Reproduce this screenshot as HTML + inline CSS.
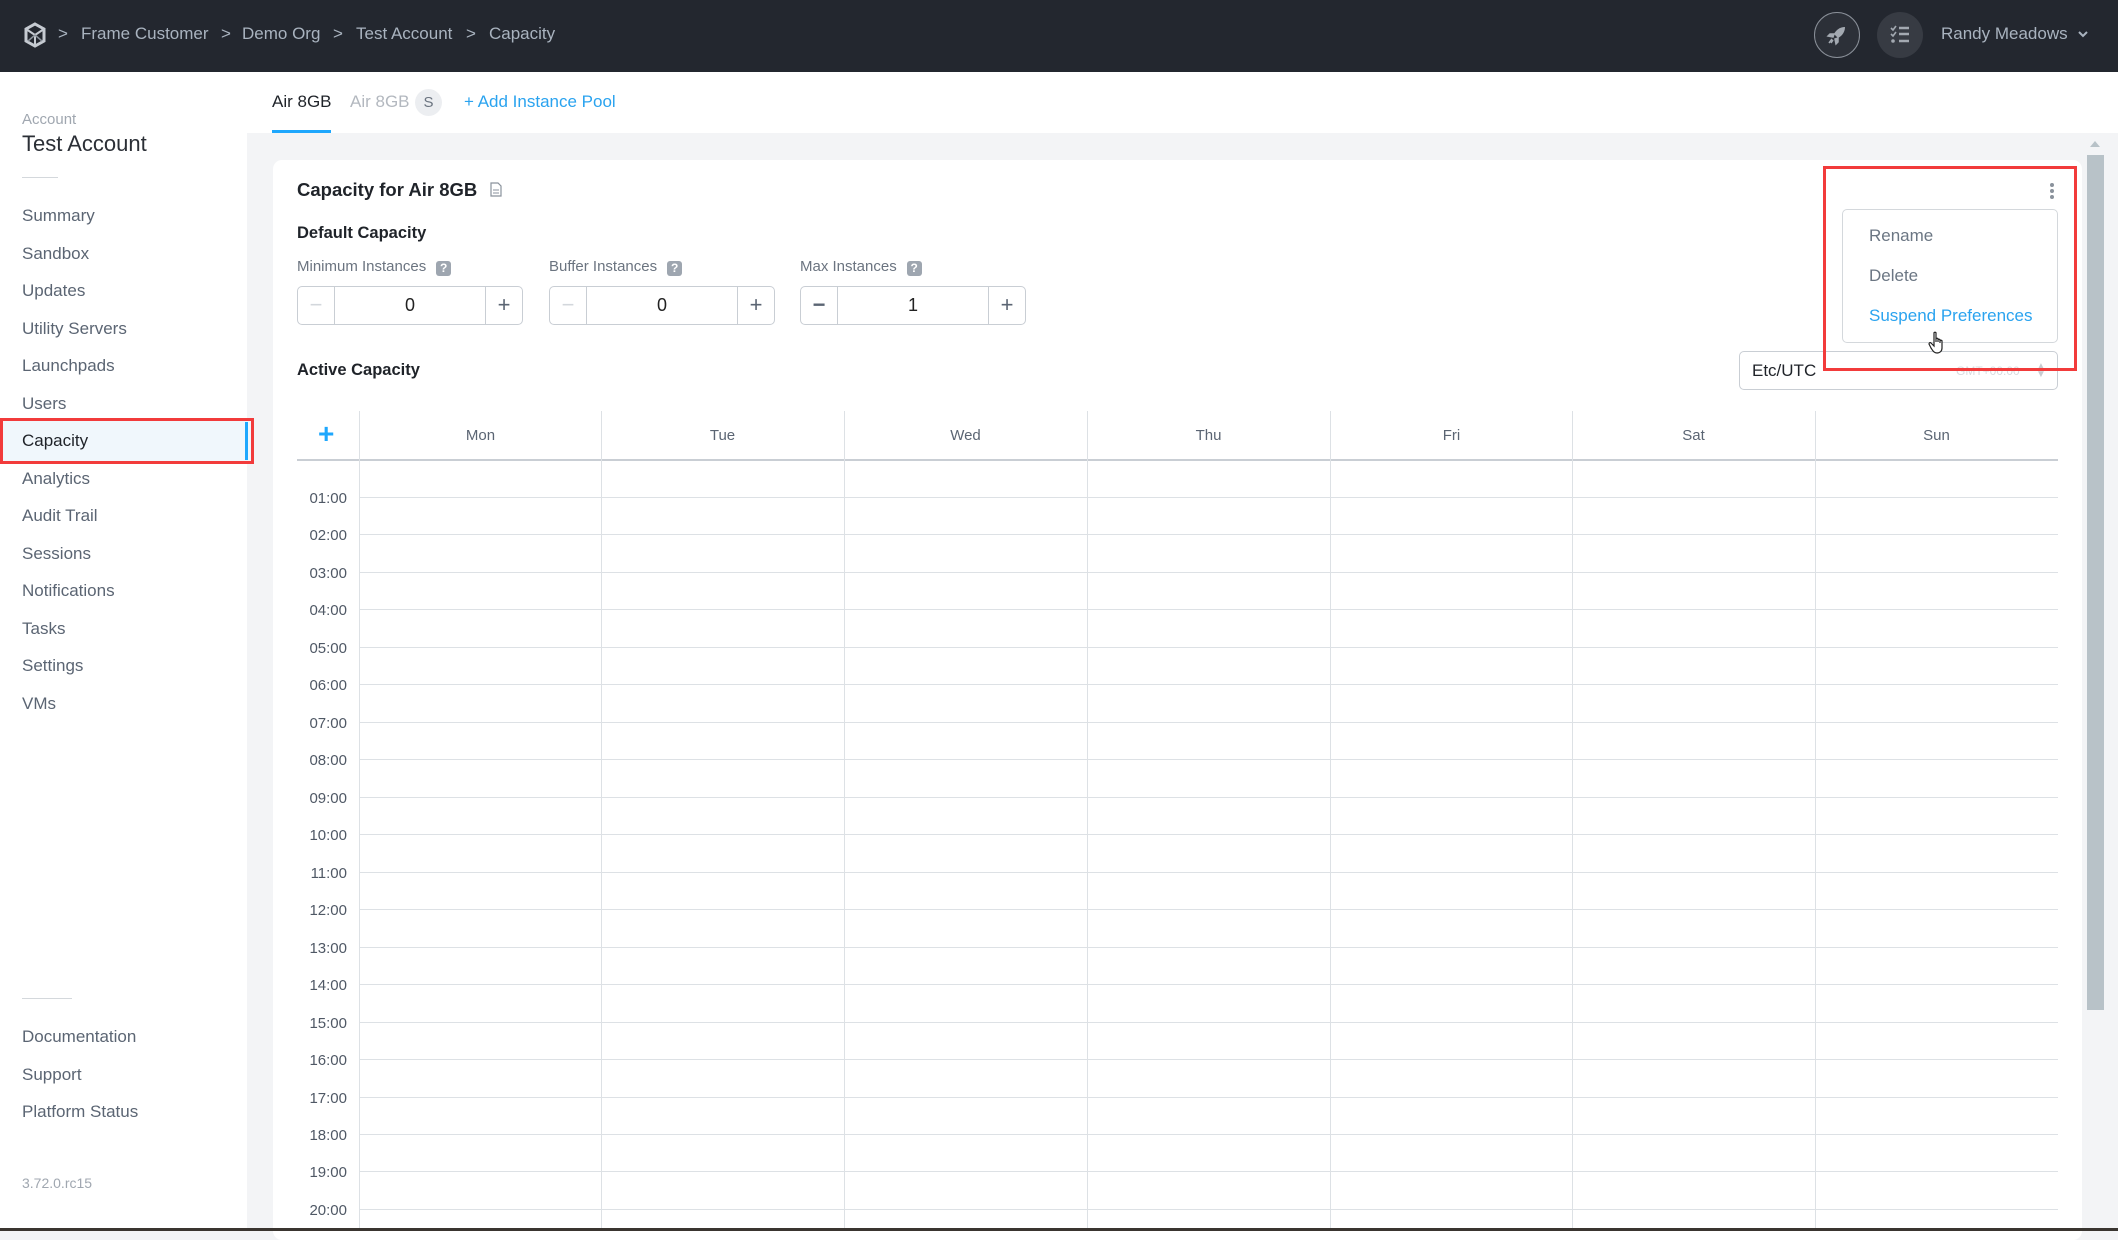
<!DOCTYPE html>
<html><head><meta charset="utf-8"><style>
*{margin:0;padding:0;box-sizing:border-box}
body{width:2118px;height:1231px;overflow:hidden;font-family:"Liberation Sans",sans-serif;background:#f3f4f6;position:relative}
.a{position:absolute;white-space:nowrap}
.hdr{left:0;top:0;width:2118px;height:72px;background:#23272f}
.bc{top:24px;font-size:17px;color:#a9b3bf}
.side{left:0;top:72px;width:247px;height:1159px;background:#fff}
.nav{left:22px;font-size:17px;color:#5b6573}
.card{left:273px;top:160px;width:1809px;height:1080px;background:#fff;border-radius:9px}
.lbl{font-size:15px;color:#6b7480;top:258px}
.q{display:inline-block;width:15px;height:15px;background:#9ea6b0;border-radius:3px;color:#fff;font-size:12px;font-weight:bold;text-align:center;line-height:15px;margin-left:10px;vertical-align:-1px}
.st{top:286px;height:39px;border:1px solid #c9ced4;border-radius:5px;width:226px;background:#fff}
.st .m,.st .p{position:absolute;top:0;width:37px;height:37px;text-align:center;line-height:36px;font-size:22px;color:#5b6573}
.st .m{left:0;border-right:1px solid #c9ced4}
.st .p{right:0;border-left:1px solid #c9ced4}
.st .v{position:absolute;left:37px;right:37px;top:0;line-height:37px;text-align:center;font-size:18px;color:#222}
.hl{left:359px;width:1699px;height:1px;background:#dde1e5}
.vl{top:411px;width:1px;height:820px;background:#dde1e5}
.tm{left:297px;width:50px;text-align:right;font-size:15px;color:#4f5865}
.day{top:427px;width:243px;text-align:center;font-size:15px;color:#5b6573}
.mi{left:1869px;font-size:17px;color:#6b7683}
</style></head><body>
<div class="a hdr"></div>
<svg class="a" style="left:23px;top:22px" width="24" height="26" viewBox="0 0 24 26"><path d="M12 2 L21 7 L21 19 L12 24 L3 19 L3 7 Z" fill="none" stroke="#c5cad1" stroke-width="3"/><path d="M3 7 L12 13 L21 7 M12 13 L12 24" stroke="#c5cad1" stroke-width="2" fill="none"/><path d="M12 13 L5 19 M12 13 L19 19" stroke="#8b929b" stroke-width="1.5"/></svg>
<div class="a bc" style="left:58px">&gt;</div>
<div class="a bc" style="left:81px">Frame Customer</div>
<div class="a bc" style="left:221px">&gt;</div>
<div class="a bc" style="left:242px">Demo Org</div>
<div class="a bc" style="left:333px">&gt;</div>
<div class="a bc" style="left:356px">Test Account</div>
<div class="a bc" style="left:466px">&gt;</div>
<div class="a bc" style="left:489px">Capacity</div>
<div class="a" style="left:1814px;top:12px;width:46px;height:46px;border-radius:50%;border:1px solid #8a9099;background:#2c3038"></div>
<svg class="a" style="left:1825px;top:23px" width="24" height="24" viewBox="0 0 24 24"><path d="M20 4 C15 4 11 7 9 11 L13 15 C17 13 20 9 20 4 Z" fill="#a3a9b1"/><path d="M9 11 L5 11 L3 13 L8 14 Z M13 15 L13 19 L11 21 L10 16 Z M7 16 L4 20 M8 17 L6 20" stroke="#a3a9b1" fill="#a3a9b1" stroke-width="1.5"/></svg>
<div class="a" style="left:1877px;top:12px;width:46px;height:46px;border-radius:50%;background:#373b43"></div>
<svg class="a" style="left:1889px;top:24px" width="22" height="22" viewBox="0 0 22 22"><path d="M2 4 L4 6 L7 2 M2 10 L4 12 L7 8" stroke="#a3a9b1" stroke-width="1.6" fill="none"/><circle cx="4" cy="17" r="1.8" fill="#a3a9b1"/><path d="M10 4 H20 M10 10 H20 M10 17 H20" stroke="#a3a9b1" stroke-width="2.4"/></svg>
<div class="a" style="left:1941px;top:24px;font-size:17px;color:#a9b3bf">Randy Meadows</div>
<svg class="a" style="left:2077px;top:29px" width="12" height="10" viewBox="0 0 12 10"><path d="M2 3 L6 7 L10 3" stroke="#a9b3bf" stroke-width="2" fill="none"/></svg>

<div class="a side"></div>
<div class="a" style="left:22px;top:111px;font-size:15px;color:#a0a7b0">Account</div>
<div class="a" style="left:22px;top:131px;font-size:22px;color:#2b2f36">Test Account</div>
<div class="a" style="left:22px;top:177px;width:36px;height:1px;background:#d4d8dc"></div>
<div class="a" style="left:0;top:420px;width:251px;height:42px;background:#f0f7fc"></div>
<div class="a" style="left:245px;top:422px;width:3px;height:38px;background:#1ea7fd"></div>
<div class="a" style="left:0;top:418px;width:254px;height:46px;border:3px solid #f23b3b"></div>
<div class="a nav" style="top:206px">Summary</div>
<div class="a nav" style="top:244px">Sandbox</div>
<div class="a nav" style="top:281px">Updates</div>
<div class="a nav" style="top:319px">Utility Servers</div>
<div class="a nav" style="top:356px">Launchpads</div>
<div class="a nav" style="top:394px">Users</div>
<div class="a nav" style="top:431px;color:#1f2329">Capacity</div>
<div class="a nav" style="top:469px">Analytics</div>
<div class="a nav" style="top:506px">Audit Trail</div>
<div class="a nav" style="top:544px">Sessions</div>
<div class="a nav" style="top:581px">Notifications</div>
<div class="a nav" style="top:619px">Tasks</div>
<div class="a nav" style="top:656px">Settings</div>
<div class="a nav" style="top:694px">VMs</div>
<div class="a" style="left:22px;top:998px;width:50px;height:1px;background:#d4d8dc"></div>
<div class="a nav" style="top:1027px">Documentation</div>
<div class="a nav" style="top:1065px">Support</div>
<div class="a nav" style="top:1102px">Platform Status</div>
<div class="a" style="left:22px;top:1175px;font-size:14px;color:#a0a7b0">3.72.0.rc15</div>

<div class="a" style="left:247px;top:72px;width:1871px;height:61px;background:#fff"></div>
<div class="a" style="left:272px;top:92px;font-size:17px;color:#1f2329">Air 8GB</div>
<div class="a" style="left:272px;top:130px;width:59px;height:3px;background:#1ea7fd"></div>
<div class="a" style="left:350px;top:92px;font-size:17px;color:#b3b8bf">Air 8GB</div>
<div class="a" style="left:415px;top:89px;width:27px;height:27px;border-radius:50%;background:#eceef1;color:#6b7480;font-size:15px;text-align:center;line-height:27px">S</div>
<div class="a" style="left:464px;top:92px;font-size:17px;color:#2aa3ef">+ Add Instance Pool</div>

<div class="a card"></div>
<div class="a" style="left:2087px;top:155px;width:17px;height:855px;background:#b8c2c8"></div>
<div class="a" style="left:2090px;top:141px;width:0;height:0;border-left:5px solid transparent;border-right:5px solid transparent;border-bottom:6px solid #b8c2c8"></div>
<div class="a" style="left:297px;top:179px;font-size:18.5px;font-weight:bold;color:#1f2329">Capacity for Air 8GB</div>
<svg class="a" style="left:490px;top:182px" width="12" height="15" viewBox="0 0 12 15"><path d="M1 1 H8 L11 4 V14 H1 Z" fill="none" stroke="#8a929c" stroke-width="1.2"/><path d="M3 8 H9 M3 11 H9" stroke="#8a929c"/></svg>
<div class="a" style="left:297px;top:224px;font-size:16.5px;font-weight:bold;color:#1f2329">Default Capacity</div>
<div class="a lbl" style="left:297px">Minimum Instances<span class="q">?</span></div>
<div class="a lbl" style="left:549px">Buffer Instances<span class="q">?</span></div>
<div class="a lbl" style="left:800px">Max Instances<span class="q">?</span></div>
<div class="a st" style="left:297px"><div class="m" style="color:#d3d7dc">−</div><div class="v">0</div><div class="p">+</div></div>
<div class="a st" style="left:549px"><div class="m" style="color:#d3d7dc">−</div><div class="v">0</div><div class="p">+</div></div>
<div class="a st" style="left:800px"><div class="m" style="font-weight:bold">−</div><div class="v">1</div><div class="p">+</div></div>
<div class="a" style="left:297px;top:361px;font-size:16.5px;font-weight:bold;color:#1f2329">Active Capacity</div>

<div class="a" style="left:1739px;top:351px;width:319px;height:39px;border:1px solid #c9ced4;border-radius:5px;background:#fff"></div>
<div class="a" style="left:1752px;top:361px;font-size:17px;color:#1f2329">Etc/UTC</div>
<div class="a" style="left:1956px;top:364px;font-size:12px;color:#d8dbdf">GMT+00:00</div>
<div class="a" style="left:2036px;top:363px;font-size:10px;color:#c8ccd1;line-height:8px">▲<br>▼</div>

<div class="a" style="left:297px;top:459px;width:1761px;height:2px;background:#c9ced4"></div>
<div class="a" style="left:318px;top:418px;font-size:28px;color:#1ea7fd;font-weight:bold">+</div>
<div class="a vl" style="left:359px"></div>
<div class="a vl" style="left:601px"></div>
<div class="a vl" style="left:844px"></div>
<div class="a vl" style="left:1087px"></div>
<div class="a vl" style="left:1330px"></div>
<div class="a vl" style="left:1572px"></div>
<div class="a vl" style="left:1815px"></div>
<div class="a day" style="left:359px">Mon</div>
<div class="a day" style="left:601px">Tue</div>
<div class="a day" style="left:844px">Wed</div>
<div class="a day" style="left:1087px">Thu</div>
<div class="a day" style="left:1330px">Fri</div>
<div class="a day" style="left:1572px">Sat</div>
<div class="a day" style="left:1815px">Sun</div>

<div class="a hl" style="top:497px"></div><div class="a tm" style="top:490px">01:00</div>
<div class="a hl" style="top:534px"></div><div class="a tm" style="top:527px">02:00</div>
<div class="a hl" style="top:572px"></div><div class="a tm" style="top:565px">03:00</div>
<div class="a hl" style="top:609px"></div><div class="a tm" style="top:602px">04:00</div>
<div class="a hl" style="top:647px"></div><div class="a tm" style="top:640px">05:00</div>
<div class="a hl" style="top:684px"></div><div class="a tm" style="top:677px">06:00</div>
<div class="a hl" style="top:722px"></div><div class="a tm" style="top:715px">07:00</div>
<div class="a hl" style="top:759px"></div><div class="a tm" style="top:752px">08:00</div>
<div class="a hl" style="top:797px"></div><div class="a tm" style="top:790px">09:00</div>
<div class="a hl" style="top:834px"></div><div class="a tm" style="top:827px">10:00</div>
<div class="a hl" style="top:872px"></div><div class="a tm" style="top:865px">11:00</div>
<div class="a hl" style="top:909px"></div><div class="a tm" style="top:902px">12:00</div>
<div class="a hl" style="top:947px"></div><div class="a tm" style="top:940px">13:00</div>
<div class="a hl" style="top:984px"></div><div class="a tm" style="top:977px">14:00</div>
<div class="a hl" style="top:1022px"></div><div class="a tm" style="top:1015px">15:00</div>
<div class="a hl" style="top:1059px"></div><div class="a tm" style="top:1052px">16:00</div>
<div class="a hl" style="top:1097px"></div><div class="a tm" style="top:1090px">17:00</div>
<div class="a hl" style="top:1134px"></div><div class="a tm" style="top:1127px">18:00</div>
<div class="a hl" style="top:1171px"></div><div class="a tm" style="top:1164px">19:00</div>
<div class="a hl" style="top:1209px"></div><div class="a tm" style="top:1202px">20:00</div>

<div class="a" style="left:2050px;top:183px;width:4px;height:4px;border-radius:50%;background:#8a929c"></div>
<div class="a" style="left:2050px;top:189px;width:4px;height:4px;border-radius:50%;background:#8a929c"></div>
<div class="a" style="left:2050px;top:195px;width:4px;height:4px;border-radius:50%;background:#8a929c"></div>
<div class="a" style="left:1842px;top:209px;width:216px;height:134px;border:1px solid #d4d8dc;border-radius:5px;background:#fff"></div>
<div class="a mi" style="top:226px">Rename</div>
<div class="a mi" style="top:266px">Delete</div>
<div class="a mi" style="top:306px;color:#2aa3ef">Suspend Preferences</div>
<div class="a" style="left:1823px;top:166px;width:254px;height:205px;border:3px solid #f23b3b"></div>
<svg class="a" style="left:1928px;top:331px" width="18" height="24" viewBox="0 0 18 24"><path d="M6 2 C6 1 8 1 8 2 V11 V8 C8 7 10 7 10 8 V11 V9 C10 8 12 8 12 9 V12 V10 C12 9 14 9 14 10 V17 C14 20 12 22 9 22 C6 22 5 20 3 17 L1 13 C1 12 2 11 3 12 L6 15 Z" fill="#fff" stroke="#222" stroke-width="1.2"/></svg>
<div class="a" style="left:0;top:1228px;width:2118px;height:3px;background:#3a3530"></div>
</body></html>
